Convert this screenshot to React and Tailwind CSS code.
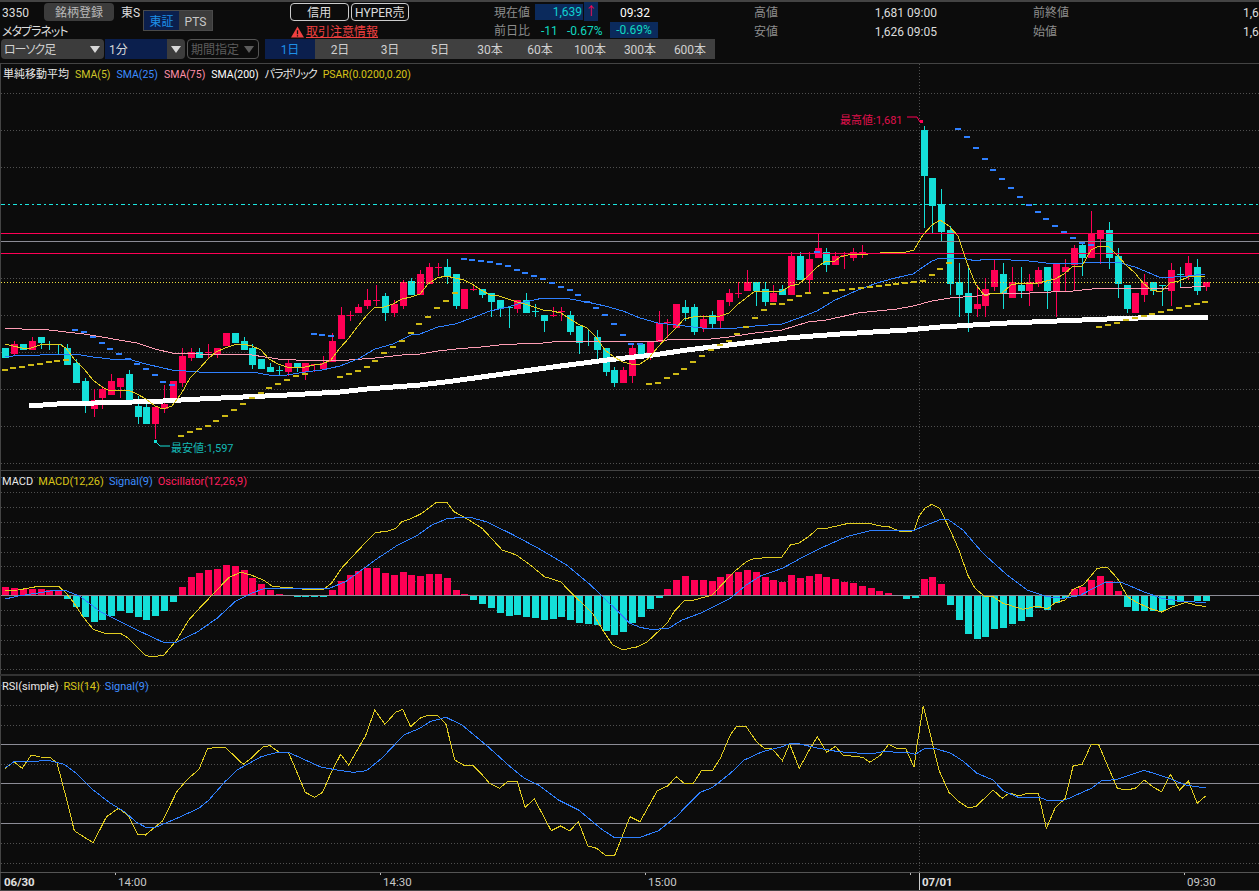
import React from 'react';

const TEAL = '#14dfd8';
const RED = '#ff0055';
const YELLOW = '#e0cc20';
const BLUE = '#2f80ff';
const PINK = '#ff9db4';
const DOT = '#505050';
const LINE = '#8c8c96';

// type, body top, body bottom, wick top, wick bottom (screen px)
const candles = [
  ['t',348,357,348,357],['r',344,353,341,354],['t',344,349,344,349],['r',341,349,337,349],['t',337,342,337,348],
  ['t',344,344,341,349],['t',344,344,344,353],['t',348,364,344,364],['t',363,382,359,382],['t',381,402,378,412],
  ['r',400,408,389,416],['r',389,397,386,408],['r',381,394,374,394],['r',378,386,378,397],['t',374,401,370,401],
  ['t',406,416,396,423],['t',407,423,400,423],['r',407,423,407,438],['r',404,408,385,412],['r',381,400,381,400],
  ['r',356,382,348,386],['r',352,357,348,360],['t',352,357,348,357],['r',352,352,344,357],['r',348,353,348,357],
  ['r',333,345,333,345],['t',333,342,333,342],['t',341,349,337,349],['t',348,364,344,368],['t',359,368,359,368],
  ['t',367,371,363,371],['t',370,370,366,375],['r',363,371,359,375],['t',363,367,363,371],['r',363,371,363,379],
  ['r',364,364,364,371],['r',363,368,356,368],['r',341,361,333,361],['r',315,338,307,338],['r',315,315,311,320],
  ['r',307,312,304,312],['r',300,305,289,308],['r',300,300,285,305],['t',296,312,293,320],['r',304,312,300,316],
  ['r',282,305,280,308],['t',281,294,278,294],['r',274,294,270,294],['r',267,283,263,283],['r',267,267,263,275],
  ['t',267,275,259,283],['t',274,305,274,308],['r',289,308,289,308],['r',289,289,285,290],['t',289,294,289,297],
  ['t',293,301,293,316],['t',300,308,300,316],['t',307,307,307,327],['r',300,308,300,312],['t',300,312,293,312],
  ['t',311,311,304,316],['t',315,320,315,331],['r',315,315,307,316],['r',311,311,307,320],['t',315,331,311,334],
  ['t',326,342,326,353],['t',341,341,330,345],['t',337,349,330,360],['t',348,371,348,375],['t',370,382,367,386],
  ['r',370,382,367,382],['r',348,375,345,382],['t',344,353,344,353],['r',342,355,342,359],['r',323,341,311,341],
  ['r',322,322,319,337],['r',304,327,304,327],['t',307,312,300,320],['t',307,331,304,334],['r',319,327,315,331],
  ['t',315,323,311,327],['r',300,320,300,327],['r',293,301,289,305],['r',293,293,282,297],['r',282,290,270,290],
  ['t',282,290,282,305],['t',289,301,282,305],['r',293,301,285,301],['t',289,294,285,294],['r',256,294,252,294],
  ['t',256,279,252,279],['r',259,279,252,292],['r',248,257,234,257],['t',252,264,248,271],['r',256,264,252,264],
  ['r',255,255,252,268],['r',252,257,248,260],['r',252,254,245,257],
  null,null,null,null,null,null,
  ['t',130,175,126,227],['t',178,205,178,233],['t',204,231,189,241],['t',230,283,226,294],['t',282,294,263,316],
  ['t',293,312,267,331],['r',304,308,285,316],['r',289,305,278,316],['r',270,286,260,290],['t',274,293,263,308],
  ['r',282,297,267,297],['t',285,290,267,297],['r',282,290,274,305],['r',270,283,267,286],['t',267,290,267,308],
  ['r',263,290,263,316],['r',267,271,259,290],['r',248,264,245,290],['t',245,257,241,275],['r',233,257,211,257],
  ['r',230,238,230,263],['t',230,257,222,268],['t',256,283,248,297],['t',285,308,285,312],['r',293,312,293,312],
  ['r',282,294,274,301],['t',282,290,282,294],['t',285,285,285,305],['r',270,290,263,305],['t',274,274,267,286],
  ['r',263,275,256,279],['t',267,290,259,294],['r',282,286,282,290],
];

const sma5a = [[5,344],[13,346],[22,348],[31,348],[40,345],[49,344],[59,344],[66,348],[75,360],[84,369],[93,380],[102,387],[110,391],[128,390],[137,394],[146,399],[155,406],[163,409],[172,406],[181,394],[190,378],[199,369],[208,359],[216,352],[225,348],[234,345],[243,344],[252,346],[261,350],[269,359],[278,364],[287,367],[305,367],[314,365],[322,364],[331,360],[340,348],[349,338],[358,326],[367,315],[375,307],[384,307],[393,304],[402,299],[411,297],[420,294],[428,284],[437,278],[446,276],[455,278],[464,280],[472,284],[481,290],[490,295],[499,296],[508,299],[517,302],[525,304],[534,307],[543,310],[552,311],[561,313],[570,319],[578,324],[587,328],[596,337],[605,350],[614,357],[623,362],[631,364],[640,364],[649,358],[658,347],[667,337],[676,328],[684,319],[693,317],[720,316],[729,313],[737,305],[746,298],[755,291],[782,291],[790,286],[799,284],[808,276],[817,267],[826,261],[835,261],[840,257],[852,254],[868,254]];
const sma5b = [[880,252],[906,252],[914,250],[923,235],[932,225],[940,220],[949,226],[958,236],[967,263],[976,285],[985,296],[993,293],[1002,293],[1011,285],[1020,283],[1038,283],[1055,279],[1064,274],[1073,266],[1082,266],[1091,250],[1099,246],[1108,246],[1117,255],[1126,265],[1135,273],[1144,284],[1152,290],[1161,292],[1170,283],[1179,281],[1188,277],[1197,276],[1205,276]];
const sma25 = [[5,356],[13,356],[40,355],[57,354],[75,354],[93,357],[110,359],[128,359],[146,364],[163,368],[172,370],[199,372],[252,372],[269,375],[287,375],[305,372],[322,370],[340,366],[358,359],[375,349],[393,344],[411,335],[420,334],[438,327],[455,324],[472,318],[490,311],[508,307],[525,302],[543,298],[570,299],[587,302],[605,306],[623,311],[640,318],[658,323],[676,325],[693,327],[711,329],[737,328],[755,326],[782,324],[799,318],[817,311],[835,300],[840,298],[858,290],[877,283],[895,278],[913,274],[923,267],[932,261],[940,258],[967,259],[976,261],[985,259],[1011,260],[1029,261],[1046,263],[1073,264],[1091,262],[1117,262],[1135,267],[1152,274],[1161,278],[1188,276],[1205,274]];
const sma75 = [[5,328],[22,329],[49,330],[66,332],[84,334],[102,337],[119,340],[137,343],[155,349],[172,353],[199,354],[252,355],[278,359],[296,360],[349,360],[375,358],[393,356],[411,354],[420,354],[438,351],[456,349],[481,347],[499,345],[517,344],[543,343],[552,342],[570,341],[614,341],[631,342],[658,341],[676,339],[711,339],[729,337],[755,333],[782,330],[808,322],[826,320],[840,317],[858,313],[877,311],[897,309],[913,306],[932,301],[950,298],[977,296],[993,293],[1030,293],[1073,291],[1092,289],[1170,288],[1180,288],[1205,286]];
const sma200 = [[29,406],[57,404],[133,402],[163,401],[200,399],[243,397],[287,395],[340,392],[367,389],[420,385],[453,381],[503,374],[553,367],[607,360],[653,355],[687,350],[737,344],[787,338],[840,334],[907,330],[940,327],[1007,323],[1107,319],[1170,317],[1208,317]];

const z4 = ([x, y]) => [x / 3, 280 + y / 3];
const z5 = ([x, y]) => [420 + x / 3, 230 + y / 3];
const z6 = ([x, y]) => [840 + x / 3, 100 + y / 3];

const psarYellow = [
  ...[[15,269],[40,264],[67,261],[93,255],[120,252],[147,246],[172,243],[199,240],[543,468],[570,456],[597,447],[624,438],[648,423],[675,408],[702,390],[729,372],[756,354],[783,339],[807,324],[834,312],[861,300],[888,288],[915,282],[1020,291],[1047,282],[1074,273],[1101,261],[1125,243],[1152,219],[1179,201],[1206,183],[1233,159],[1257,132]].map(z4),
  ...[[24,261],[51,234],[78,213],[105,189],[687,462],[714,459],[741,444],[768,432],[792,417],[819,396],[846,378],[873,360],[900,345],[927,333],[951,312],[978,291],[1005,264],[1032,240],[1059,222],[1086,222],[1110,210],[1137,198],[1164,189],[1218,189],[1245,183]].map(z5),
  ...[[7,570],[36,567],[63,564],[90,561],[117,558],[144,555],[168,552],[195,549],[222,546],[249,543],[276,525],[300,507],[327,489],[777,681],[804,675],[831,669],[858,660],[885,654],[912,648],[936,642],[963,636],[990,630],[1017,624],[1044,618],[1071,612],[1095,606]].map(z6),
];
const psarBlue = [
  ...[[225,150],[252,156],[279,171],[306,189],[330,207],[357,222],[384,237],[411,252],[438,267],[465,285],[489,306],[516,315],[942,162],[966,165],[993,168]].map(z4),
  ...[[132,87],[156,90],[183,93],[210,96],[237,102],[264,108],[291,120],[315,129],[342,138],[369,147],[396,159],[423,171],[450,180],[474,195],[501,216],[528,234],[555,255],[582,282],[609,315],[633,342],[660,342],[1191,66]].map(z5),
  ...[[354,87],[381,111],[408,144],[435,177],[459,210],[486,237],[513,264],[540,291],[567,315],[594,336],[618,357],[645,378],[672,396],[699,414],[726,429],[753,435]].map(z6),
];

// oscillator bar tops, read from the 3x crops; zero line sits at 376
const oscTops = [351,354,357,357,357,360,362,384,408,438,453,447,435,420,426,438,447,435,420,393,351,321,309,300,297,285,288,300,324,342,360,372,376,380,380,380,380,360,333,315,303,294,294,309,315,306,315,318,312,312,324,360,372,387,399,411,426,435,432,438,441,447,444,438,447,456,459,462,480,492,483,
  456,438,414,381,357,330,318,330,330,333,321,312,306,300,306,321,330,336,315,324,318,312,321,327,336,339,348,354,363,369,376,384,381,
  327,321,342,402,447,489,504,498,474,471,459,450,438,411,417,396,382,357,351,330,318,333,363,408,420,420,420,420,402,393,376,390,390];

const left = (pts, top) => pts.map(([x, y]) => [x / 2.489, top + y / 3]);
const right = (pts, top) => pts.map(([x, y]) => [630 + x / 2.493, top + y / 3]);

const macdLine = [
  ...left([[13,361],[45,360],[90,350],[147,350],[165,370],[185,400],[205,438],[232,478],[260,490],[300,490],[320,505],[362,557],[385,560],[408,555],[440,510],[470,450],[500,410],[540,360],[570,322],[600,307],[625,315],[655,330],[680,350],[713,352],[760,358],[805,358],[825,340],[850,295],[900,230],[935,187],[960,185],[985,175],[1000,155],[1025,145],[1050,130],[1085,98],[1112,97],[1130,125],[1160,145],[1200,175],[1250,240],[1285,255],[1320,285],[1355,320],[1395,335],[1430,378],[1475,430],[1500,480],[1525,525],[1552,540]], 470),
  ...right([[0,535],[20,530],[42,517],[70,485],[95,455],[110,425],[135,392],[160,390],[205,375],[240,330],[265,300],[290,275],[310,265],[378,262],[400,225],[420,220],[445,200],[467,177],[490,175],[545,160],[595,160],[625,168],[645,170],[670,183],[690,186],[708,182],[720,140],[735,115],[752,103],[772,115],[800,185],[820,240],[842,315],[860,355],[885,380],[905,380],[930,400],[980,418],[1015,408],[1040,417],[1060,398],[1085,390],[1105,358],[1130,345],[1165,295],[1190,292],[1215,325],[1240,380],[1265,398],[1300,417],[1325,426],[1350,412],[1385,397],[1415,407],[1435,409]], 470),
];
const macdSignal = [
  ...left([[13,387],[45,378],[90,370],[130,362],[165,362],[200,380],[250,425],[300,455],[350,485],[405,516],[440,516],[490,487],[540,445],[585,395],[625,370],[660,355],[720,355],[760,357],[820,355],[860,335],[900,300],[940,265],[990,225],[1040,195],[1075,165],[1115,145],[1170,142],[1210,155],[1270,190],[1340,235],[1410,285],[1470,345],[1530,415],[1568,460]], 470),
  ...right([[25,472],[50,478],[95,476],[130,450],[175,430],[250,385],[290,345],[325,318],[380,295],[430,262],[480,232],[540,200],[600,182],[708,181],[740,165],[775,148],[795,150],[830,180],[880,250],[940,315],[990,360],[1040,380],[1080,385],[1120,377],[1185,337],[1225,337],[1280,365],[1325,385],[1370,393],[1435,398]], 470),
];
const rsiLine = [
  ...left([[13,280],[35,260],[55,280],[78,240],[100,246],[125,247],[142,265],[165,370],[185,467],[210,487],[232,503],[265,425],[295,400],[318,420],[343,478],[362,480],[405,437],[440,350],[465,315],[495,283],[517,220],[560,216],[605,268],[625,250],[655,215],[672,212],[695,232],[718,233],[735,280],[760,352],[783,367],[803,352],[825,290],[848,238],[868,270],[910,182],[933,105],[958,148],[985,112],[1002,103],[1022,155],[1045,130],[1065,121],[1088,121],[1110,148],[1132,255],[1155,271],[1178,272],[1197,295],[1218,325],[1243,340],[1265,318],[1287,318],[1307,397],[1330,372],[1372,467],[1395,453],[1418,467],[1440,440],[1463,513],[1485,520],[1507,541],[1530,541],[1568,425]], 675),
  ...right([[25,440],[68,347],[95,332],[115,305],[135,325],[158,325],[178,287],[205,288],[225,250],[250,180],[265,155],[290,155],[315,200],[335,220],[355,222],[380,257],[398,207],[422,280],[447,225],[467,185],[490,232],[512,214],[530,240],[580,247],[598,262],[625,240],[645,208],[665,220],[687,220],[708,277],[715,215],[731,93],[745,160],[770,285],[795,352],[820,380],[843,398],[862,395],[905,345],[928,370],[945,354],[970,363],[990,355],[1018,355],[1038,460],[1060,398],[1085,370],[1105,272],[1127,268],[1150,208],[1168,208],[1190,270],[1215,340],[1237,345],[1260,340],[1282,315],[1305,337],[1325,350],[1347,298],[1370,345],[1392,318],[1414,385],[1435,363]], 675),
];
const rsiSignal = [
  ...left([[13,278],[35,260],[125,257],[160,268],[190,295],[232,345],[275,385],[310,410],[340,442],[365,458],[385,458],[440,430],[495,400],[520,375],[560,320],[590,285],[650,245],[690,232],[718,232],[760,255],[800,277],[850,287],[880,292],[912,287],[950,250],[1005,180],[1045,160],[1070,140],[1110,127],[1150,150],[1210,210],[1270,275],[1305,310],[1340,330],[1390,375],[1440,405],[1500,465],[1530,488],[1568,488]], 675),
  ...right([[25,487],[70,468],[115,425],[175,352],[205,338],[250,295],[285,255],[330,230],[380,215],[400,205],[420,206],[470,220],[520,230],[600,237],[640,228],[665,233],[695,233],[712,238],[735,220],[760,220],[800,235],[830,258],[865,295],[905,315],[930,347],[970,368],[1020,367],[1040,376],[1085,375],[1150,340],[1175,318],[1215,313],[1282,286],[1340,308],[1385,330],[1435,339]], 675),
];

const slotX = (i) => Math.round(5.2 + 8.83 * i);

const Path = ({ pts, color, width = 1 }) => (
  <polyline
    points={pts.map(([x, y]) => `${x.toFixed(1)},${y.toFixed(1)}`).join(' ')}
    fill="none"
    stroke={color}
    strokeWidth={width}
    shapeRendering="crispEdges"
  />
);

const HLine = ({ y, color, dash }) => (
  <line x1="1" x2="1259" y1={y + 0.5} y2={y + 0.5} stroke={color} strokeDasharray={dash} shapeRendering="crispEdges" />
);

const Grid = ({ rows, top, bottom }) => (
  <>
    {rows.map((y) => (
      <HLine key={y} y={y} color={DOT} dash="1 2" />
    ))}
    <line x1="919.5" x2="919.5" y1={top} y2={bottom} stroke={DOT} strokeDasharray="1 2" shapeRendering="crispEdges" />
    <rect x="0" y={top} width="1" height={bottom - top} fill="#444" />
  </>
);

const Candle = ({ c, i }) => {
  const [type, top, bottom, wickTop, wickBottom] = c;
  const x = slotX(i);
  const fill = type === 't' ? TEAL : RED;
  return (
    <g fill={fill} shapeRendering="crispEdges">
      <rect x={x} y={wickTop} width="1" height={wickBottom - wickTop + 1} />
      <rect x={x - 3} y={top} width="7" height={bottom - top + 1} />
    </g>
  );
};

const PriceChart = () => (
  <svg viewBox="0 64 1259 406" className="block w-full h-full">
    <Grid rows={[93, 130, 167, 241, 278, 315, 352, 389, 426, 463]} top={64} bottom={470} />
    {candles.map((c, i) => c && <Candle key={i} c={c} i={i} />)}
    <HLine y={204} color="#1ce6df" dash="4 3 2 3" />
    <HLine y={233} color={RED} />
    <HLine y={241} color={LINE} />
    <HLine y={253} color={RED} />
    <HLine y={282} color="#f0e040" dash="1 2" />
    <Path pts={sma200} color="#ffffff" width={5} />
    <Path pts={sma75} color={PINK} />
    <Path pts={sma25} color={BLUE} />
    <Path pts={sma5a} color={YELLOW} />
    <Path pts={sma5b} color={YELLOW} />
    {psarYellow.map(([x, y], i) => (
      <rect key={i} x={Math.round(x) - 3} y={Math.round(y) - 1} width="6" height="2" fill="#cdb916" />
    ))}
    {psarBlue.map(([x, y], i) => (
      <rect key={i} x={Math.round(x) - 3} y={Math.round(y) - 1} width="6" height="2" fill={BLUE} />
    ))}
    <text x="840" y="124" fontSize="11" fill="#e0104c">最高値:1,681</text>
    <polyline points="907,117 917,117 920,122" fill="none" stroke={RED} />
    <rect x="920" y="120" width="3" height="3" fill={RED} />
    <text x="171" y="452" fontSize="11" fill="#14b8b4">最安値:1,597</text>
    <polyline points="170,446 160,446 156,442" fill="none" stroke={TEAL} />
    <rect x="154" y="440" width="3" height="3" fill={TEAL} />
  </svg>
);

const MacdChart = () => (
  <svg viewBox="0 471 1259 203" className="block w-full h-full">
    <Grid rows={[477, 492, 507, 522, 537, 552, 566, 581, 610, 625, 640, 654, 669]} top={471} bottom={674} />
    {oscTops.map((t, i) => {
      const h = Math.round((376 - t) / 3);
      if (h === 0) return null;
      return (
        <rect
          key={i}
          x={slotX(i) - 3}
          y={h > 0 ? 595 - h : 596}
          width="7"
          height={Math.abs(h)}
          fill={h > 0 ? RED : TEAL}
          shapeRendering="crispEdges"
        />
      );
    })}
    <HLine y={595} color={LINE} />
    <Path pts={macdLine} color={YELLOW} />
    <Path pts={macdSignal} color={BLUE} />
  </svg>
);

const RsiChart = () => (
  <svg viewBox="0 676 1259 215" className="block w-full h-full">
    <Grid rows={[685, 705, 725, 764, 803, 843, 863]} top={676} bottom={872} />
    <HLine y={744} color={LINE} />
    <HLine y={783} color={LINE} />
    <HLine y={823} color={LINE} />
    <Path pts={rsiLine} color={YELLOW} />
    <Path pts={rsiSignal} color={BLUE} />
    <rect x="0" y="872" width="1259" height="1" fill="#555" />
    <rect x="0" y="890" width="1259" height="1" fill="#444" />
    <rect x="0" y="873" width="1" height="17" fill="#444" />
    {[115, 380, 645, 910, 1184].map((x) => (
      <rect key={x} x={x} y="873" width="1" height="2" fill="#bbb" />
    ))}
    <rect x="919" y="873" width="1" height="17" fill="#ccc" />
    <g fontSize="11.5" fill="#c8c8c8">
      <text x="4" y="886" fontWeight="700" fill="#e0e0e0">06/30</text>
      <text x="118" y="886">14:00</text>
      <text x="383" y="886">14:30</text>
      <text x="648" y="886">15:00</text>
      <text x="922" y="886" fontWeight="700" fill="#e0e0e0">07/01</text>
      <text x="1187" y="886">09:30</text>
    </g>
  </svg>
);

const Caret = ({ color = '#d8d8d8' }) => (
  <svg viewBox="0 0 10 7" className="w-[10px] h-[7px]">
    <path d="M0 0h10L5 7z" fill={color} />
  </svg>
);

const Legend = ({ items, className }) => (
  <div className={`absolute left-[2px] top-[4px] flex leading-[14px] ${className}`}>
    {items.map(([label, cls]) => (
      <span key={label} className={cls}>{label}</span>
    ))}
  </div>
);

const ranges = ['2日', '3日', '5日', '30本', '60本', '100本', '300本', '600本'];

const Header = () => (
  <header className="h-[64px] border-t-2 border-b border-[#444] text-[12px] leading-[16px]">
    <div className="flex h-[37px]">
      <div className="w-[143px] shrink-0">
        <div className="flex items-center h-[19px]">
          <span className="w-[44px] pl-[2px] pt-[2px] text-[#ddd]">3350</span>
          <span className="w-[70px] h-[18px] pt-[2px] flex items-center justify-center bg-[#3c3c3c] rounded-sm text-[#b8b8b8]">銘柄登録</span>
          <span className="ml-[7px] pt-[2px] text-[#ddd] whitespace-nowrap">東S</span>
        </div>
        <div className="pl-[2px] pt-[3px] text-[#ddd] [font-feature-settings:'palt'] tracking-[-1px]">メタプラネット</div>
      </div>
      <div className="w-[70px] h-[21px] mt-[8px] shrink-0 flex border border-[#4a4a4a]">
        <span className="w-[35px] pt-[2px] flex items-center justify-center bg-[#0b1f4d] text-[#1e90e8]">東証</span>
        <span className="flex-1 pt-[2px] flex items-center justify-center bg-[#3c3c3c] text-[#c8c8c8]">PTS</span>
      </div>
      <div className="ml-[77px] w-[119px] shrink-0">
        <div className="flex gap-[2px] mt-[1px]">
          <span className="w-[59px] h-[18px] pt-[2px] flex items-center justify-center border border-[#ccc] rounded-sm text-[#ddd]">信用</span>
          <span className="w-[59px] h-[18px] pt-[2px] flex items-center justify-center border border-[#ccc] rounded-sm text-[#ddd]">HYPER売</span>
        </div>
        <div className="flex items-center gap-[2px] ml-[1px] mt-[3px] whitespace-nowrap">
          <svg viewBox="0 0 14 12" className="w-[13px] h-[12px] shrink-0">
            <path d="M7 0l7 12H0z" fill="#f04040" />
            <path d="M6.3 4h1.4v4.4H6.3zM6.3 9.4h1.4v1.4H6.3z" fill="#111" />
          </svg>
          <span className="text-[#f04040] underline">取引注意情報</span>
        </div>
      </div>
      <div className="ml-[85px] w-[166px] shrink-0">
        <div className="flex items-center h-[19px]">
          <span className="w-[41px] pt-[2px] text-[#8c8c8c]">現在値</span>
          <span className="w-[48px] h-[16px] bg-[#0b2a5c] text-right text-[#10d0d0] pr-[1px]">1,639</span>
          <span className="w-[14px] h-[19px] ml-[1px] bg-[#0b2a5c] flex items-center justify-center text-[#ff0055]">↑</span>
          <span className="ml-[22px] pt-[2px] text-white">09:32</span>
        </div>
        <div className="flex items-center h-[18px]">
          <span className="w-[41px] pt-[2px] text-[#8c8c8c]">前日比</span>
          <span className="w-[32px] pl-[6px] pt-[2px] text-[#10d8c0]">-11</span>
          <span className="w-[43px] pt-[2px] text-[#10d8c0]">-0.67%</span>
          <span className="w-[48px] h-[16px] bg-[#0b2a5c] text-center text-[#10d8c0]">-0.69%</span>
        </div>
      </div>
      <div className="ml-[94px] w-[279px] shrink-0">
        <div className="flex items-center h-[20px] mt-[1px]">
          <span className="w-[24px] text-[#8c8c8c]">高値</span>
          <span className="w-[126px] text-right text-[#ddd]">1,681</span>
          <span className="ml-[3px] text-[#ddd]">09:00</span>
        </div>
        <div className="flex items-center h-[17px]">
          <span className="w-[24px] text-[#8c8c8c]">安値</span>
          <span className="w-[126px] text-right text-[#ddd]">1,626</span>
          <span className="ml-[3px] text-[#ddd]">09:05</span>
        </div>
      </div>
      <div className="w-[260px] shrink-0">
        <div className="flex items-center h-[20px] mt-[1px]">
          <span className="w-[210px] shrink-0 text-[#8c8c8c]">前終値</span>
          <span className="shrink-0 text-[#ddd]">1,650</span>
        </div>
        <div className="flex items-center h-[17px]">
          <span className="w-[210px] shrink-0 text-[#8c8c8c]">始値</span>
          <span className="shrink-0 text-[#ddd]">1,645</span>
        </div>
      </div>
    </div>
    <div className="flex h-[20px]">
      <div className="ml-[1px] w-[103px] flex items-center justify-between pl-[3px] pr-[4px] bg-[#3c3c3c] rounded-sm text-[#d0d0d0]">
        <span className="pt-[2px] [font-feature-settings:'palt'] tracking-[-1px]">ローソク足</span>
        <Caret />
      </div>
      <div className="ml-[1px] w-[80px] flex items-center bg-[#3c3c3c] rounded-sm">
        <span className="w-[62px] h-full pl-[4px] pt-[2px] bg-[#0b1f4d] text-[#d8d8d8] flex items-center">1分</span>
        <span className="flex-1 flex justify-center"><Caret /></span>
      </div>
      <div className="ml-[2px] w-[72px] flex items-center justify-between pl-[3px] pr-[4px] border border-[#555] rounded-sm text-[#5c5c5c]">
        <span className="pt-[2px]">期間指定</span>
        <Caret color="#5c5c5c" />
      </div>
      <div className="ml-[6px] flex w-[450px] bg-[#404040] text-[#d0d0d0]">
        <span className="w-[50px] pt-[2px] flex items-center justify-center bg-[#0b1f4d] text-[#1e90e8]">1日</span>
        {ranges.map((r) => (
          <span key={r} className="w-[50px] pt-[2px] flex items-center justify-center">{r}</span>
        ))}
      </div>
    </div>
  </header>
);

export default function App() {
  return (
    <div className="w-[1259px] h-[891px] overflow-hidden bg-[#0c0c0c] font-['Roboto','Noto_Sans_CJK_JP',sans-serif]">
      <Header />
      <section className="relative h-[407px] border-b border-[#444]">
        <PriceChart />
        <Legend
          className="text-[10.5px] gap-[6px]"
          items={[
            ['単純移動平均', 'text-[#e8e8e8] text-[11px] ml-[1px]'],
            ['SMA(5)', 'text-[#cfc528]'],
            ['SMA(25)', 'text-[#3d8cff]'],
            ['SMA(75)', 'text-[#ff8fa8]'],
            ['SMA(200)', 'text-white'],
            ['パラボリック', "text-[#e8e8e8] text-[11px] [font-feature-settings:'palt'] tracking-[-1px]"],
            ['PSAR(0.0200,0.20)', 'text-[#d8c418]'],
          ]}
        />
      </section>
      <section className="relative h-[205px] border-b-2 border-[#333]">
        <MacdChart />
        <Legend
          className="text-[11px] gap-[5px]"
          items={[
            ['MACD', 'text-[#e8e8e8]'],
            ['MACD(12,26)', 'text-[#d8c418]'],
            ['Signal(9)', 'text-[#3d8cff]'],
            ['Oscillator(12,26,9)', 'text-[#ff1f5f]'],
          ]}
        />
      </section>
      <section className="relative h-[215px]">
        <RsiChart />
        <Legend
          className="text-[11px] gap-[5px]"
          items={[
            ['RSI(simple)', 'text-[#e8e8e8]'],
            ['RSI(14)', 'text-[#d8c418]'],
            ['Signal(9)', 'text-[#3d8cff]'],
          ]}
        />
      </section>
    </div>
  );
}
